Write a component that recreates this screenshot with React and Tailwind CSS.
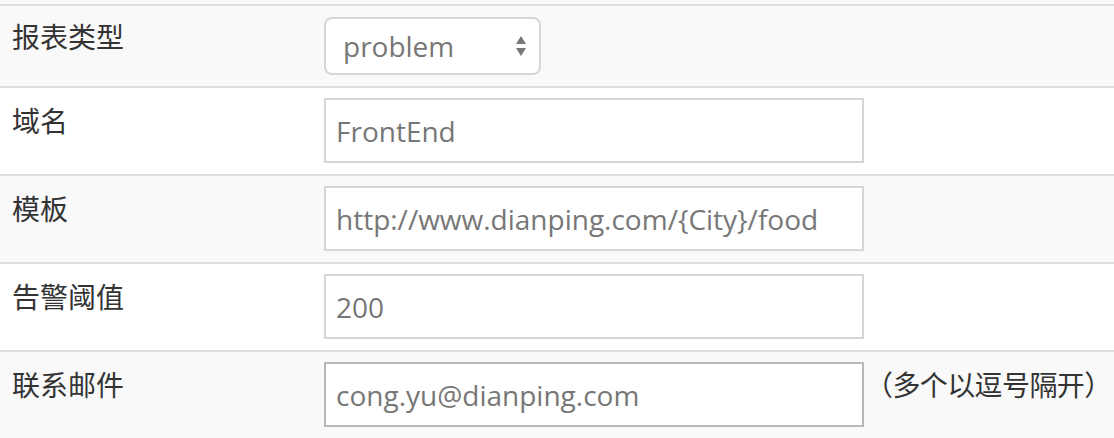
import { useState } from "react";

const font = { fontFamily: '"Open Sans", "Noto Sans CJK SC", sans-serif' };

function Row({ label, odd, first, children }) {
  return (
    <div
      className={`flex border-t-2 border-[#dddddd] ${first ? "h-[82px]" : "h-[88px]"} ${
        odd ? "bg-[#f9f9f9]" : "bg-white"
      }`}
    >
      <div
        className={`w-[312px] shrink-0 pl-[12px] text-[28px] leading-[36px] text-[#333333] ${
          first ? "pt-[13px]" : "pt-[15px]"
        }`}
      >
        {label}
      </div>
      <div className="flex min-w-0 flex-1 items-start pl-[12px] pt-[10px]">{children}</div>
    </div>
  );
}

function TextInput({ value, focus }) {
  return (
    <input
      readOnly
      value={value}
      className={`h-[65px] w-[540px] shrink-0 border-2 bg-white px-[10px] text-[28px] text-[#777777] outline-none ${
        focus ? "border-[#b8b8b8]" : "border-[#d6d6d6]"
      }`}
    />
  );
}

export default function App() {
  const [type] = useState("problem");

  return (
    <div className="h-[438px] w-[1114px] overflow-hidden bg-[#f9f9f9] pt-[4px]" style={font}>
      <Row label="报表类型" odd first>
        <div className="mt-[1px] flex h-[58px] w-[217px] items-center justify-between rounded-[8px] border-2 border-[#d6d6d6] bg-white pl-[17px] pr-[12px]">
          <span className="text-[28px] text-[#777777]">{type}</span>
          <svg width="12" height="22" viewBox="0 0 12 22">
            <path d="M6 1 L11 9 L1 9 Z" fill="#777777" />
            <path d="M1 13 L11 13 L6 21 Z" fill="#777777" />
          </svg>
        </div>
      </Row>
      <Row label="域名">
        <TextInput value="FrontEnd" />
      </Row>
      <Row label="模板" odd>
        <TextInput value="http://www.dianping.com/{City}/food" />
      </Row>
      <Row label="告警阈值">
        <TextInput value="200" />
      </Row>
      <Row label="联系邮件" odd>
        <TextInput value="cong.yu@dianping.com" focus />
        <span className="ml-[1px] shrink-0 whitespace-nowrap pt-[5px] text-[28px] leading-[36px] tracking-[-0.6px] text-[#333333]">
          （多个以逗号隔开）
        </span>
      </Row>
    </div>
  );
}
